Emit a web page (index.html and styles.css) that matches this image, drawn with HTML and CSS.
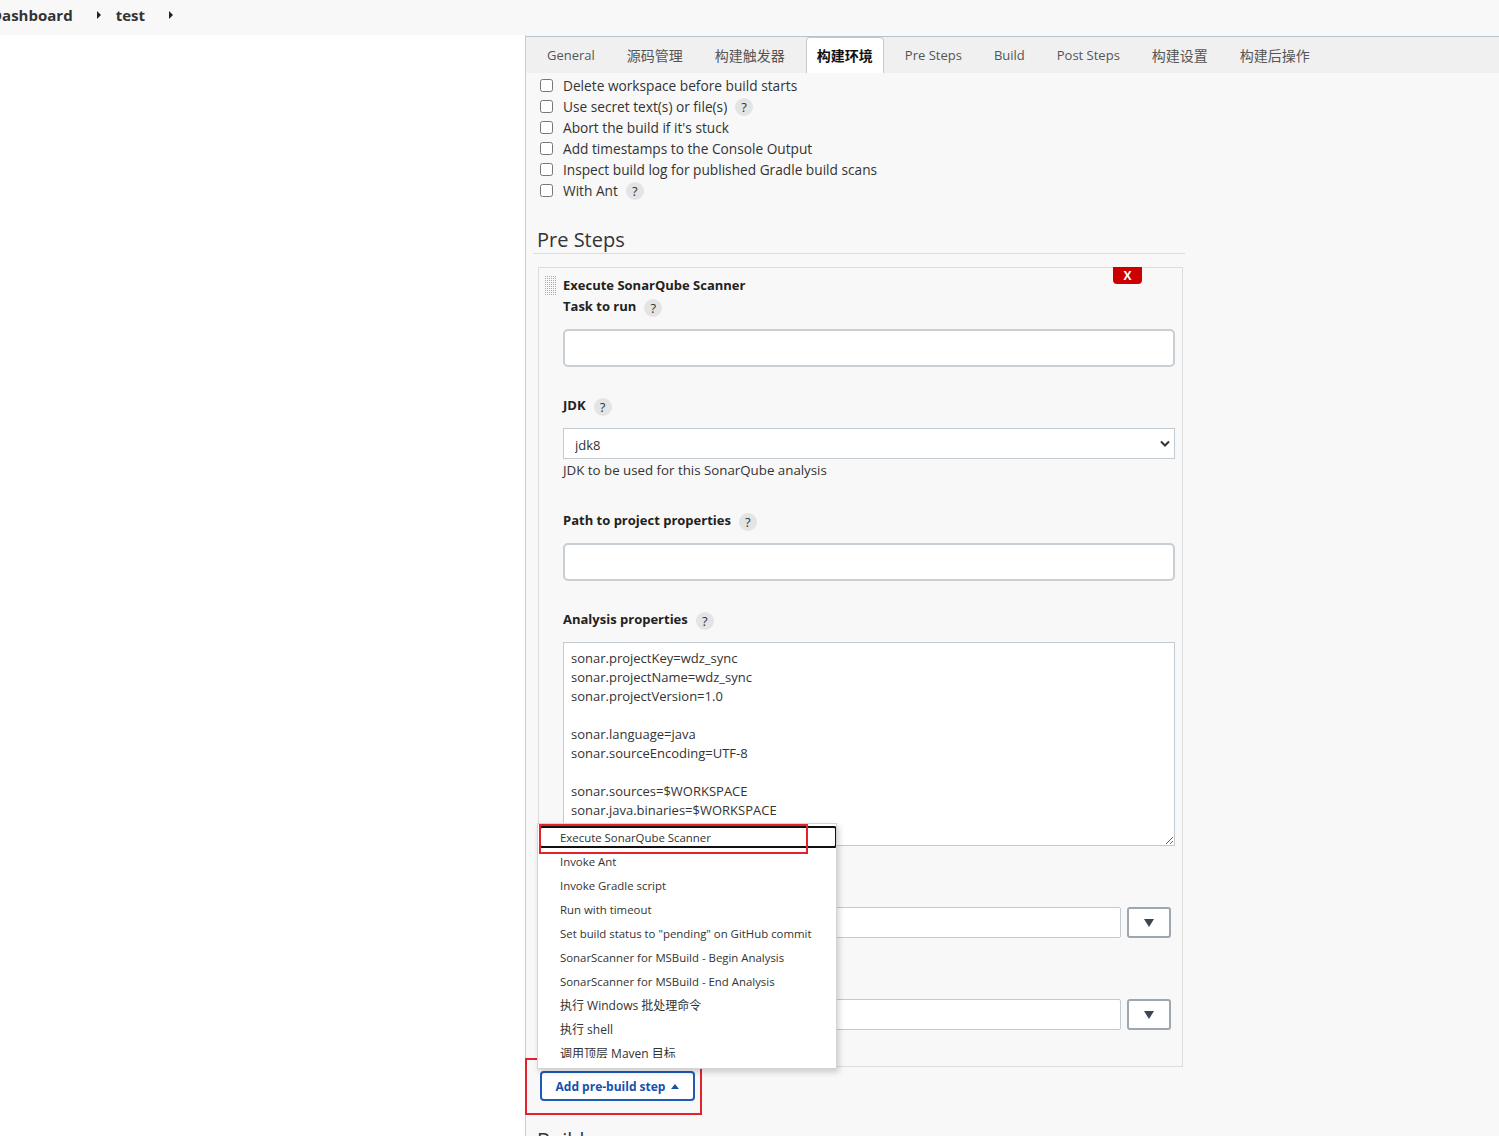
FILE: index.html
```html
<!DOCTYPE html>
<html lang="zh-CN">
<head>
    <meta charset="UTF-8">
    <meta name="viewport" content="width=device-width, initial-scale=1.0">
    <title>test Config [Jenkins]</title>
    <link rel="stylesheet" href="styles.css">
</head>
<body>
    <div class="breadcrumbs">
        <a class="crumb" href="#">Dashboard</a>
        <span class="crumb-arrow"></span>
        <a class="crumb" href="#">test</a>
        <span class="crumb-arrow"></span>
    </div>

    <div class="page">
        <div class="side"></div>

        <div class="main">
            <div class="tabs">
                <span class="tab">General</span>
                <span class="tab cjk">源码管理</span>
                <span class="tab cjk">构建触发器</span>
                <span class="tab cjk active">构建环境</span>
                <span class="tab">Pre Steps</span>
                <span class="tab">Build</span>
                <span class="tab">Post Steps</span>
                <span class="tab cjk">构建设置</span>
                <span class="tab cjk">构建后操作</span>
            </div>

            <div class="options">
                <label class="option"><input type="checkbox"><span>Delete workspace before build starts</span></label>
                <label class="option"><input type="checkbox"><span>Use secret text(s) or file(s)</span><span class="help">?</span></label>
                <label class="option"><input type="checkbox"><span>Abort the build if it's stuck</span></label>
                <label class="option"><input type="checkbox"><span>Add timestamps to the Console Output</span></label>
                <label class="option"><input type="checkbox"><span>Inspect build log for published Gradle build scans</span></label>
                <label class="option"><input type="checkbox"><span>With Ant</span><span class="help">?</span></label>
            </div>

            <section class="section">
                <h2 class="section-title">Pre Steps</h2>

                <div class="step">
                    <span class="handle"></span>
                    <button class="step-delete">X</button>
                    <div class="step-title">Execute SonarQube Scanner</div>

                    <div class="field">
                        <div class="field-label">Task to run<span class="help">?</span></div>
                        <input class="text-input" type="text">
                    </div>

                    <div class="field">
                        <div class="field-label">JDK<span class="help">?</span></div>
                        <div class="select-wrap">
                            <select class="select">
                                <option>jdk8</option>
                            </select>
                            <svg class="chevron" width="10" height="7" viewBox="0 0 10 7">
                                <path d="M1 1.5 L5 5.5 L9 1.5" fill="none" stroke="#333" stroke-width="2"/>
                            </svg>
                        </div>
                        <div class="field-desc">JDK to be used for this SonarQube analysis</div>
                    </div>

                    <div class="field">
                        <div class="field-label">Path to project properties<span class="help">?</span></div>
                        <input class="text-input" type="text">
                    </div>

                    <div class="field">
                        <div class="field-label">Analysis properties<span class="help">?</span></div>
                        <textarea class="textarea">sonar.projectKey=wdz_sync
sonar.projectName=wdz_sync
sonar.projectVersion=1.0

sonar.language=java
sonar.sourceEncoding=UTF-8

sonar.sources=$WORKSPACE
sonar.java.binaries=$WORKSPACE</textarea>
                    </div>

                    <div class="field">
                        <div class="field-label">Additional arguments<span class="help">?</span></div>
                        <div class="expand-row">
                            <input class="small-input" type="text">
                            <button class="expand-btn"><span class="down-tri"></span></button>
                        </div>
                    </div>

                    <div class="field">
                        <div class="field-label">JVM Options<span class="help">?</span></div>
                        <div class="expand-row">
                            <input class="small-input" type="text">
                            <button class="expand-btn"><span class="down-tri"></span></button>
                        </div>
                    </div>
                </div>

                <div class="add-step">
                    <div class="menu">
                        <div class="menu-list">
                            <div class="menu-item focused">Execute SonarQube Scanner</div>
                            <div class="menu-item">Invoke Ant</div>
                            <div class="menu-item">Invoke Gradle script</div>
                            <div class="menu-item">Run with timeout</div>
                            <div class="menu-item">Set build status to "pending" on GitHub commit</div>
                            <div class="menu-item">SonarScanner for MSBuild - Begin Analysis</div>
                            <div class="menu-item">SonarScanner for MSBuild - End Analysis</div>
                            <div class="menu-item cjk">执行 Windows 批处理命令</div>
                            <div class="menu-item cjk">执行 shell</div>
                            <div class="menu-item cjk">调用顶层 Maven 目标</div>
                        </div>
                        <span class="mark mark-item"></span>
                    </div>
                    <button class="add-btn">Add pre-build step <span class="up-tri"></span></button>
                    <span class="mark mark-button"></span>
                </div>
            </section>

            <section class="section">
                <h2 class="section-title">Build</h2>
            </section>
        </div>
    </div>
</body>
</html>
```

FILE: styles.css
```css
* {
    margin: 0;
    padding: 0;
    box-sizing: border-box;
}

body {
    font-family: 'Open Sans', 'Noto Sans CJK SC', sans-serif;
    font-size: 13px;
    color: #333;
    background: #fff;
    height: 1136px;
    overflow: hidden;
}

/* breadcrumbs */
.breadcrumbs {
    height: 35px;
    background: #f8f8f8;
    display: flex;
    align-items: center;
    padding-bottom: 5px;
    margin-left: -9px;
}

.crumb {
    color: #333;
    font-weight: 700;
    font-size: 15px;
    text-decoration: none;
}

.crumb-arrow {
    width: 0;
    height: 0;
    border-top: 4px solid transparent;
    border-bottom: 4px solid transparent;
    border-left: 4px solid #222;
    margin: 0 15px 0 24px;
}

/* layout */
.page {
    display: flex;
}

.side {
    width: 525px;
    flex-shrink: 0;
}

.main {
    flex: 1;
    background: #f8f8f8;
    border-left: 1px solid #ccc;
    min-height: 1101px;
}

/* tabs */
.tabs {
    margin-top: 1px;
    height: 37px;
    background: #f0f0f0;
    border-top: 1px solid #b8c2ca;
    display: flex;
    align-items: flex-end;
    padding-left: 10px;
}

.tab {
    height: 36px;
    line-height: 35px;
    padding: 0 10px;
    margin-right: 10px;
    color: #555;
    font-size: 13px;
    border: 1px solid transparent;
    border-bottom: none;
}

.tab.cjk {
    font-size: 14px;
}

.tab.active {
    background: #fff;
    border-color: #c8c8c8;
    border-radius: 4px 4px 0 0;
    color: #111;
    font-weight: 700;
}

/* options */
.options {
    padding: 2px 0 0 14px;
}

.option {
    display: flex;
    align-items: center;
    height: 21px;
    font-size: 13.7px;
    color: #333;
}

.option input {
    width: 13px;
    height: 13px;
    margin: 0 10px 0 0;
}

.help {
    display: inline-block;
    width: 18px;
    height: 18px;
    line-height: 18px;
    border-radius: 50%;
    background: #e4e4e4;
    color: #333;
    font-size: 13px;
    font-weight: 400;
    text-align: center;
    margin-left: 8px;
    vertical-align: middle;
}

/* sections */
.section {
    width: 652px;
    margin-left: 7px;
}

.section-title {
    font-size: 20px;
    font-weight: 400;
    color: #333;
    line-height: 26px;
    padding-left: 4px;
    margin-top: 26px;
    border-bottom: 1px solid #ddd;
}

.step {
    position: relative;
    margin: 13px 2px 0 5px;
    border: 1px solid #ddd;
    background: #f8f8f8;
    padding: 7px 7px 8px 24px;
}

.handle {
    position: absolute;
    left: 5px;
    top: 8px;
    width: 12px;
    height: 19px;
    background: conic-gradient(#aaa 25%, transparent 0) 0 0 / 2px 2px;
}

.step-delete {
    position: absolute;
    top: -1px;
    right: 40px;
    width: 29px;
    height: 17px;
    background: #cc0000;
    color: #fff;
    border: none;
    border-radius: 0 0 4px 4px;
    font-family: inherit;
    font-weight: 700;
    font-size: 12px;
    line-height: 17px;
}

.step-title {
    font-weight: 700;
    line-height: 21px;
    color: #222;
}

.field {
    margin-bottom: 28px;
}

.field-label {
    font-weight: 700;
    line-height: 21px;
    margin-bottom: 12px;
    color: #222;
}

.text-input {
    display: block;
    width: 100%;
    height: 38px;
    border: 2px solid #c7ced4;
    border-radius: 5px;
    background: #fff;
    font: inherit;
}

.select-wrap {
    position: relative;
}

.select {
    display: block;
    width: 100%;
    height: 31px;
    border: 1px solid #c3cbd2;
    background: #fff;
    padding: 3px 0 0 11px;
    font: inherit;
    color: #333;
    appearance: none;
}

.chevron {
    position: absolute;
    right: 5px;
    top: 12px;
}

.field-desc {
    line-height: 23px;
    font-size: 13.3px;
    color: #333;
}

.textarea {
    display: block;
    width: 100%;
    height: 204px;
    border: 1px solid #c3cbd2;
    background: #fff;
    padding: 6px 7px;
    font: inherit;
    line-height: 19px;
    color: #333;
}

.expand-row {
    display: flex;
    gap: 6px;
    margin-right: 4px;
}

.small-input {
    flex: 1;
    height: 31px;
    border: 1px solid #c3cbd2;
    border-radius: 2px;
    background: #fff;
}

.expand-btn {
    width: 44px;
    height: 31px;
    border: 2px solid #9ea7af;
    border-radius: 3px;
    background: #fff;
    display: flex;
    align-items: center;
    justify-content: center;
}

.down-tri {
    width: 0;
    height: 0;
    border-left: 5px solid transparent;
    border-right: 5px solid transparent;
    border-top: 8px solid #3c4650;
}

/* add step + menu */
.add-step {
    position: relative;
    width: fit-content;
    margin: 4px 0 0 7px;
}

.add-btn {
    height: 30px;
    width: 155px;
    border: 2px solid #1d5bb8;
    border-radius: 4px;
    background: #fff;
    color: #1650b0;
    font-family: inherit;
    font-size: 12px;
    font-weight: 700;
    display: flex;
    align-items: center;
    justify-content: center;
    gap: 6px;
}

.up-tri {
    width: 0;
    height: 0;
    border-left: 4px solid transparent;
    border-right: 4px solid transparent;
    border-bottom: 5px solid #1650b0;
}

.menu {
    position: absolute;
    left: -3px;
    bottom: calc(100% + 2px);
    width: 300px;
    background: #fff;
    border: 1px solid #d4d4d4;
    box-shadow: 2px 3px 6px rgba(0, 0, 0, 0.18);
    padding: 2px 0 10px;
    z-index: 5;
}

.menu-list {
    height: 232px;
    overflow: hidden;
}

.menu-item {
    height: 24px;
    line-height: 24px;
    padding-left: 22px;
    font-size: 11.4px;
    color: #333;
    white-space: nowrap;
}

.menu-item.cjk {
    font-size: 12px;
}

.menu-item.focused {
    margin: 0 0 2px 1px;
    width: 298px;
    height: 22px;
    line-height: 19px;
    border: 2px solid #111;
    border-radius: 3px;
    padding-left: 19px;
}

.mark {
    position: absolute;
    border: 2px solid #e3222b;
    pointer-events: none;
}

.mark-item {
    left: 1px;
    top: 0;
    width: 269px;
    height: 30px;
}

.mark-button {
    left: -15px;
    top: -13px;
    width: 177px;
    height: 57px;
}
```
